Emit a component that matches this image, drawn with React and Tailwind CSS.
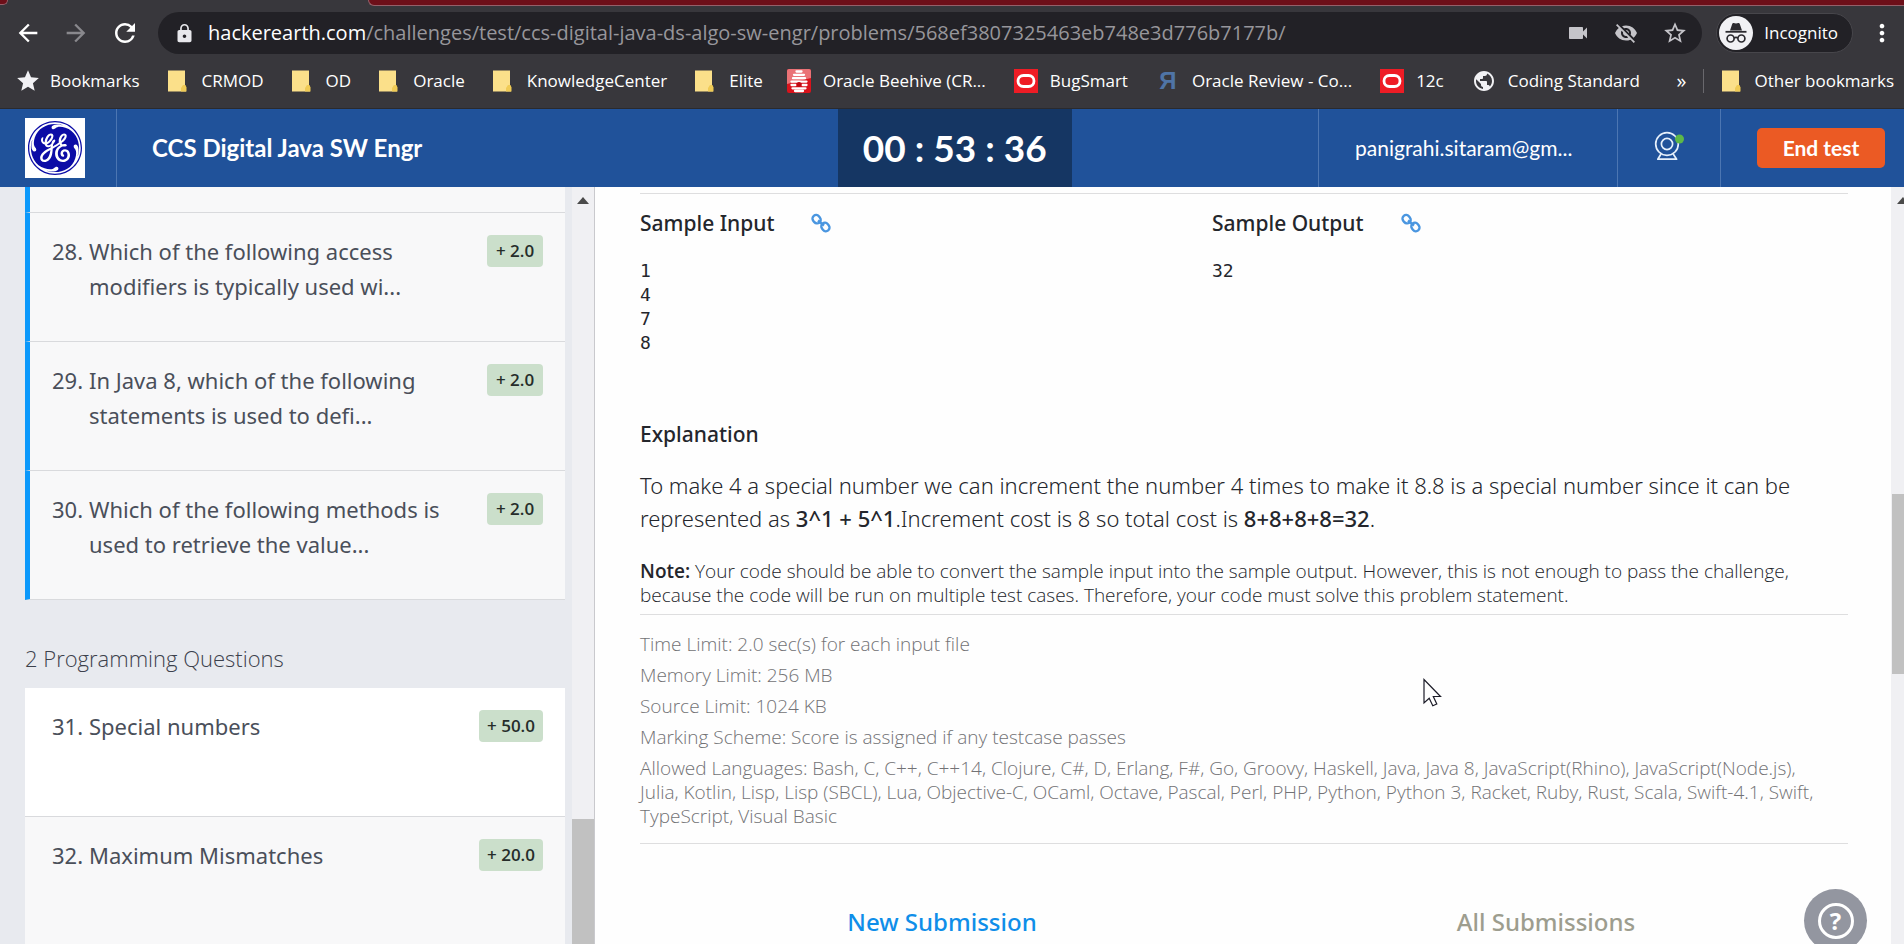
import {
  MdArrowBack,
  MdArrowForward,
  MdRefresh,
  MdLock,
  MdStar,
  MdStarBorder,
  MdVideocam,
  MdVisibilityOff,
  MdMoreVert,
  MdPublic,
} from "react-icons/md";
import { SiGeneralelectric } from "react-icons/si";

function FolderIcon() {
  return (
    <svg width="22" height="22" viewBox="0 0 22 22" aria-hidden="true">
      <path d="M0 0.5h17v16l1 1v4h-18z" fill="#fbe08a" />
      <path d="M13 21.5v-3.5l2-3h2.5l1 2.5v4z" fill="#f0cb55" />
    </svg>
  );
}

function OracleIcon() {
  return (
    <svg width="24" height="24" viewBox="0 0 24 24" aria-hidden="true">
      <rect width="24" height="24" fill="#ee1c25" />
      <rect x="4" y="6.5" width="16" height="11" rx="5.5" fill="none" stroke="#fff" strokeWidth="2.8" />
    </svg>
  );
}

function BeehiveIcon() {
  return (
    <svg width="24" height="24" viewBox="0 0 24 24" className="-ml-1" aria-hidden="true">
      <rect width="24" height="24" rx="2" fill="#d8131c" />
      <path d="M0 2a2 2 0 0 1 2-2h20a2 2 0 0 1 2 2v7Q12 12 0 15z" fill="#ea7276" />
      <path
        d="M9.5 2.5h5M7 5.8h10M6 9.2h12M4.5 12.6h15M4.5 16h4M15.5 16h4M5.5 19.3h13M8 22h8"
        stroke="#fff"
        strokeWidth="2.3"
        strokeLinecap="round"
      />
      <circle cx="12" cy="15.5" r="2.5" fill="#c00a14" />
    </svg>
  );
}

function ReviewIcon() {
  return (
    <span className="w-6 text-center font-['Liberation_Sans',sans-serif] text-2xl leading-6 font-bold text-[#4f74a6]" aria-hidden="true">
      Я
    </span>
  );
}

function IncognitoIcon() {
  return (
    <svg width="34" height="34" viewBox="0 0 34 34" aria-hidden="true">
      <circle cx="17" cy="17" r="17" fill="#f1f1f4" />
      <path d="M11 14.5l2.3-6.8q.4-1 1.4-.7l2.3.6 2.3-.6q1-.3 1.4.7l2.3 6.8z" fill="#2b2a2f" />
      <path d="M6.5 15.8h21" stroke="#2b2a2f" strokeWidth="1.8" />
      <g fill="none" stroke="#2b2a2f" strokeWidth="1.7">
        <circle cx="11.6" cy="22.5" r="3.5" />
        <circle cx="22.4" cy="22.5" r="3.5" />
        <path d="M15 22q2-1.4 4 0" />
      </g>
    </svg>
  );
}

function LinkIcon() {
  return (
    <svg width="20" height="20" viewBox="0 0 20 20" fill="none" stroke="#4a96e0" strokeWidth="2.4" aria-hidden="true">
      <rect x="2" y="1.8" width="7.2" height="8.8" rx="3.6" transform="rotate(-40 5.6 6.2)" />
      <rect x="10.8" y="9.6" width="7.2" height="8.8" rx="3.6" transform="rotate(-40 14.4 14)" />
      <path d="M7 7.5l6 5" />
    </svg>
  );
}

function WebcamIcon() {
  return (
    <svg width="32" height="32" viewBox="0 0 32 32" fill="none" aria-hidden="true">
      <g stroke="#e6f0fb" strokeWidth="1.7">
        <circle cx="14" cy="14" r="11.3" />
        <circle cx="14" cy="14" r="5.6" />
        <path d="M8 24l-3.2 5.2h18.8L20.2 24" strokeLinejoin="round" />
      </g>
      <circle cx="26.5" cy="9" r="4.5" fill="#5cb848" />
    </svg>
  );
}

function Cursor() {
  return (
    <svg width="20" height="30" viewBox="0 0 20 30" aria-hidden="true">
      <path
        d="M1 1.5v23.5l5.2-4.8 3.6 7.6 4-1.8-3.5-7.5h7.2z"
        fill="#fff"
        stroke="#1c1c28"
        strokeWidth="1.2"
      />
    </svg>
  );
}

function ScrollArrow() {
  return (
    <svg width="12" height="7" viewBox="0 0 12 7" className="shrink-0" aria-hidden="true">
      <path d="M6 0l6 7H0z" fill="#4a4a4a" />
    </svg>
  );
}

const bookmarks = [
  { label: "Bookmarks", icon: <MdStar size={26} className="-mr-[3px] -ml-[3px] text-[#f1f1f4]" /> },
  { label: "CRMOD", icon: <FolderIcon /> },
  { label: "OD", icon: <FolderIcon /> },
  { label: "Oracle", icon: <FolderIcon /> },
  { label: "KnowledgeCenter", icon: <FolderIcon /> },
  { label: "Elite", icon: <FolderIcon /> },
  { label: "Oracle Beehive (CR...", icon: <BeehiveIcon /> },
  { label: "BugSmart", icon: <OracleIcon /> },
  { label: "Oracle Review - Co...", icon: <ReviewIcon /> },
  { label: "12c", icon: <OracleIcon /> },
  { label: "Coding Standard", icon: <MdPublic size={24} className="text-[#f1f1f4]" /> },
];

const choiceQuestions = [
  { no: 28, title: "Which of the following access modifiers is typically used wi...", points: "2.0" },
  { no: 29, title: "In Java 8, which of the following statements is used to defi...", points: "2.0" },
  { no: 30, title: "Which of the following methods is used to retrieve the value...", points: "2.0" },
];

const codeQuestions = [
  { no: 31, title: "Special numbers", points: "50.0", active: true },
  { no: 32, title: "Maximum Mismatches", points: "20.0", active: false },
];

const limits = [
  "Time Limit: 2.0 sec(s) for each input file",
  "Memory Limit: 256 MB",
  "Source Limit: 1024 KB",
  "Marking Scheme: Score is assigned if any testcase passes",
  "Allowed Languages: Bash, C, C++, C++14, Clojure, C#, D, Erlang, F#, Go, Groovy, Haskell, Java, Java 8, JavaScript(Rhino), JavaScript(Node.js), Julia, Kotlin, Lisp, Lisp (SBCL), Lua, Objective-C, OCaml, Octave, Pascal, Perl, PHP, Python, Python 3, Racket, Ruby, Rust, Scala, Swift-4.1, Swift, TypeScript, Visual Basic",
];

function Browser() {
  return (
    <div className="shrink-0 border-b border-[#2a2a2e] bg-[#38373c] font-['Open_Sans',sans-serif] text-white">
      <div className="flex h-[6px] justify-between">
        <div className="h-[5px] w-2 rounded-br-lg border-r border-b border-[#94606a] bg-[#6d0f19]" />
        <div className="ml-90 grow rounded-bl-lg border-b border-l border-[#94606a] bg-[#6d0f19]" />
      </div>
      <div className="flex h-[54px] items-center pr-2 pl-[14px]">
        <button aria-label="Back" className="mr-5"><MdArrowBack size={28} /></button>
        <button aria-label="Forward" className="mr-5 text-[#89888d]"><MdArrowForward size={28} /></button>
        <button aria-label="Reload"><MdRefresh size={30} /></button>
        <div className="ml-[18px] flex h-[42px] grow items-center rounded-full bg-[#222126] pr-[14px] pl-4">
          <MdLock size={21} className="mr-[13px] shrink-0 text-[#e8e8ec]" />
          <div className="min-w-0 grow truncate text-[20px] leading-[30px] text-[#97969b]">
            <span className="text-white">hackerearth.com</span>
            /challenges/test/ccs-digital-java-ds-algo-sw-engr/problems/568ef3807325463eb748e3d776b7177b/
          </div>
          <div className="flex items-center gap-6 text-[#c5c4c9]">
            <button aria-label="Camera access"><MdVideocam size={24} /></button>
            <button aria-label="Third-party cookies blocked"><MdVisibilityOff size={24} /></button>
            <button aria-label="Bookmark this page"><MdStarBorder size={26} /></button>
          </div>
        </div>
        <button className="ml-[14px] flex h-10 items-center gap-[11px] rounded-full border border-[#47464b] bg-[#222126] pr-[14px] pl-[2px] text-[17px]">
          <IncognitoIcon />
          Incognito
        </button>
        <button aria-label="Menu" className="ml-[15px]"><MdMoreVert size={28} /></button>
      </div>
      <nav className="flex h-[42px] items-center pr-[10px] pl-[18px] text-[17px] leading-6">
        <div className="flex grow items-center gap-7">
          {bookmarks.map((b) => (
            <a key={b.label} href="#" className="flex items-center gap-3 whitespace-nowrap">
              {b.icon}
              {b.label}
            </a>
          ))}
        </div>
        <button aria-label="More bookmarks" className="mr-[17px] text-xl">»</button>
        <a href="#" className="flex items-center gap-[10px] border-l border-[#69686d] pl-[18px] whitespace-nowrap">
          <FolderIcon />
          Other bookmarks
        </a>
      </nav>
      <div className="h-[6px]" />
    </div>
  );
}

function Header() {
  return (
    <header className="flex h-[78px] shrink-0 items-stretch bg-[#20529a] font-['Lato',sans-serif] text-white">
      <div className="flex w-[44%] shrink-0">
        <div className="flex w-[117px] items-center border-r border-[#4c76b2] pl-[25px]">
          <div className="flex size-15 items-center justify-center bg-white">
            <SiGeneralelectric size={54} color="#0c0ca6" aria-label="GE" />
          </div>
        </div>
        <h1 className="flex items-center pl-[35px] text-[24px] font-bold">CCS Digital Java SW Engr</h1>
      </div>
      <div className="flex w-[234px] items-center justify-center bg-[#153663] text-[37px] font-bold">00 : 53 : 36</div>
      <div className="flex flex-1 items-stretch justify-end">
        <div className="flex w-[299px] items-center border-l border-[#4c76b2] pl-9 text-[21px]">
          panigrahi.sitaram@gm...
        </div>
        <button aria-label="Webcam" className="flex w-[104px] items-center justify-center border-x border-[#4c76b2] pb-1">
          <WebcamIcon />
        </button>
        <div className="flex w-[183px] items-center pl-9">
          <button className="h-10 w-32 rounded-[5px] bg-[#eb5a24] text-[21px] font-bold">End test</button>
        </div>
      </div>
    </header>
  );
}

function Question({ q, answered }) {
  return (
    <li
      className={
        answered
          ? "flex h-[129px] items-start border-b border-l-5 border-b-[#d9dadd] border-l-[#0b99fb] bg-[#f8f8f9] pt-[21px] pr-[22px] pl-[22px]"
          : "flex h-[129px] items-start border-b border-[#d9dadd] pt-[21px] pr-[22px] pl-[27px] " +
            (q.active ? "bg-white" : "bg-[#f8f8f9]")
      }
    >
      <a href="#" className="flex grow text-[22px] leading-[35px] text-[#4a4f5a]">
        <span className="w-[37px] shrink-0">{q.no}.</span>
        <span className="max-w-[360px]">{q.title}</span>
      </a>
      <span className="mt-px h-8 min-w-14 shrink-0 rounded-[4px] bg-[#cbdfcb] px-2 text-center font-['Open_Sans',sans-serif] text-[17px] leading-8 font-semibold text-[#262d2a]">
        + {q.points}
      </span>
    </li>
  );
}

function Sidebar() {
  return (
    <aside className="flex w-[595px] shrink-0 border-r border-[#c9c9cd] bg-[#e8eaef] font-['Noto_Sans',sans-serif]">
      <div className="grow overflow-hidden pr-[7px] pl-[25px]">
        <div className="h-[26px] border-b border-l-5 border-b-[#d9dadd] border-l-[#0b99fb] bg-[#f8f8f9]" />
        <ul>
          {choiceQuestions.map((q) => <Question key={q.no} q={q} answered />)}
        </ul>
        <h2 className="mt-[43px] mb-[15px] font-['Open_Sans',sans-serif] text-[22px] leading-[30px] font-light text-[#3c414c]">
          2 Programming Questions
        </h2>
        <ul>
          {codeQuestions.map((q) => <Question key={q.no} q={q} />)}
        </ul>
      </div>
      <div className="flex w-[22px] flex-col items-center justify-between bg-[#f0f0f3] pt-[10px]">
        <ScrollArrow />
        <div className="h-[125px] w-full bg-[#c1c1c1]" />
      </div>
    </aside>
  );
}

function Sample({ title, data }) {
  return (
    <section>
      <h3 className="flex items-center gap-[37px] font-['Noto_Sans',sans-serif] text-[21px] leading-7 font-medium">
        {title}
        <a href="#" aria-label={title}><LinkIcon /></a>
      </h3>
      <pre className="mt-[22px] h-24 font-['DejaVu_Sans_Mono',monospace] text-[18px] leading-6">{data}</pre>
    </section>
  );
}

function Problem() {
  return (
    <main className="min-w-0 grow overflow-hidden bg-[#fefefe] pt-[6px] pr-[43px] pl-[45px] font-['Open_Sans',sans-serif] text-[#24262c]">
      <hr className="border-[#dededf]" />
      <div className="mt-[15px] grid grid-cols-2 pr-16">
        <Sample title="Sample Input" data={"1\n4\n7\n8"} />
        <Sample title="Sample Output" data="32" />
      </div>
      <h3 className="mt-[65px] font-['Noto_Sans',sans-serif] text-[21px] leading-7 font-medium">Explanation</h3>
      <p className="mt-[21px] font-['Noto_Sans',sans-serif] text-[22px] leading-[33px] font-light">
        To make 4 a special number we can increment the number 4 times to make it 8.8 is a special number since it can be
        represented as <strong className="font-medium">3^1 + 5^1</strong>.Increment cost is 8 so total cost is{" "}
        <strong className="font-medium">8+8+8+8=32</strong>.
      </p>
      <p className="mt-6 text-[19px] leading-6 font-light">
        <strong className="font-semibold">Note:</strong> Your code should be able to convert the sample input into the
        sample output. However, this is not enough to pass the challenge, because the code will be run on multiple test
        cases. Therefore, your code must solve this problem statement.
      </p>
      <hr className="mt-[7px] border-[#dededf]" />
      <ul className="mt-[17px] space-y-[7px] pr-4 text-[19px] leading-6 font-light text-[#727275]">
        {limits.map((l) => <li key={l}>{l}</li>)}
      </ul>
      <hr className="mt-[15px] border-[#dededf]" />
      <div className="mt-[62px] grid grid-cols-2 font-['Noto_Sans',sans-serif] text-[24px] leading-8 font-medium">
        <button className="text-[#0f8ee9]">New Submission</button>
        <button className="text-[#9d9d8e]">All Submissions</button>
      </div>
    </main>
  );
}

export default function App() {
  return (
    <div className="relative flex h-screen flex-col overflow-hidden">
      <Browser />
      <Header />
      <div className="flex min-h-0 grow">
        <Sidebar />
        <Problem />
        <div className="w-[13px] shrink-0 overflow-hidden bg-[#f0f0f3] pt-[10px]">
          <div className="pl-[6px]"><ScrollArrow /></div>
          <div className="mt-[290px] ml-px h-[180px] bg-[#c1c1c1]" />
        </div>
      </div>
      <div className="pointer-events-none absolute top-[678px] left-[1423px]"><Cursor /></div>
      <button
        aria-label="Help"
        className="absolute right-[37px] -bottom-2 flex size-[63px] items-center justify-center rounded-full bg-[#9396a0]"
      >
        <span className="flex size-9 items-center justify-center rounded-full border-3 border-white font-['Open_Sans',sans-serif] text-2xl leading-none font-bold text-white">
          ?
        </span>
      </button>
    </div>
  );
}
